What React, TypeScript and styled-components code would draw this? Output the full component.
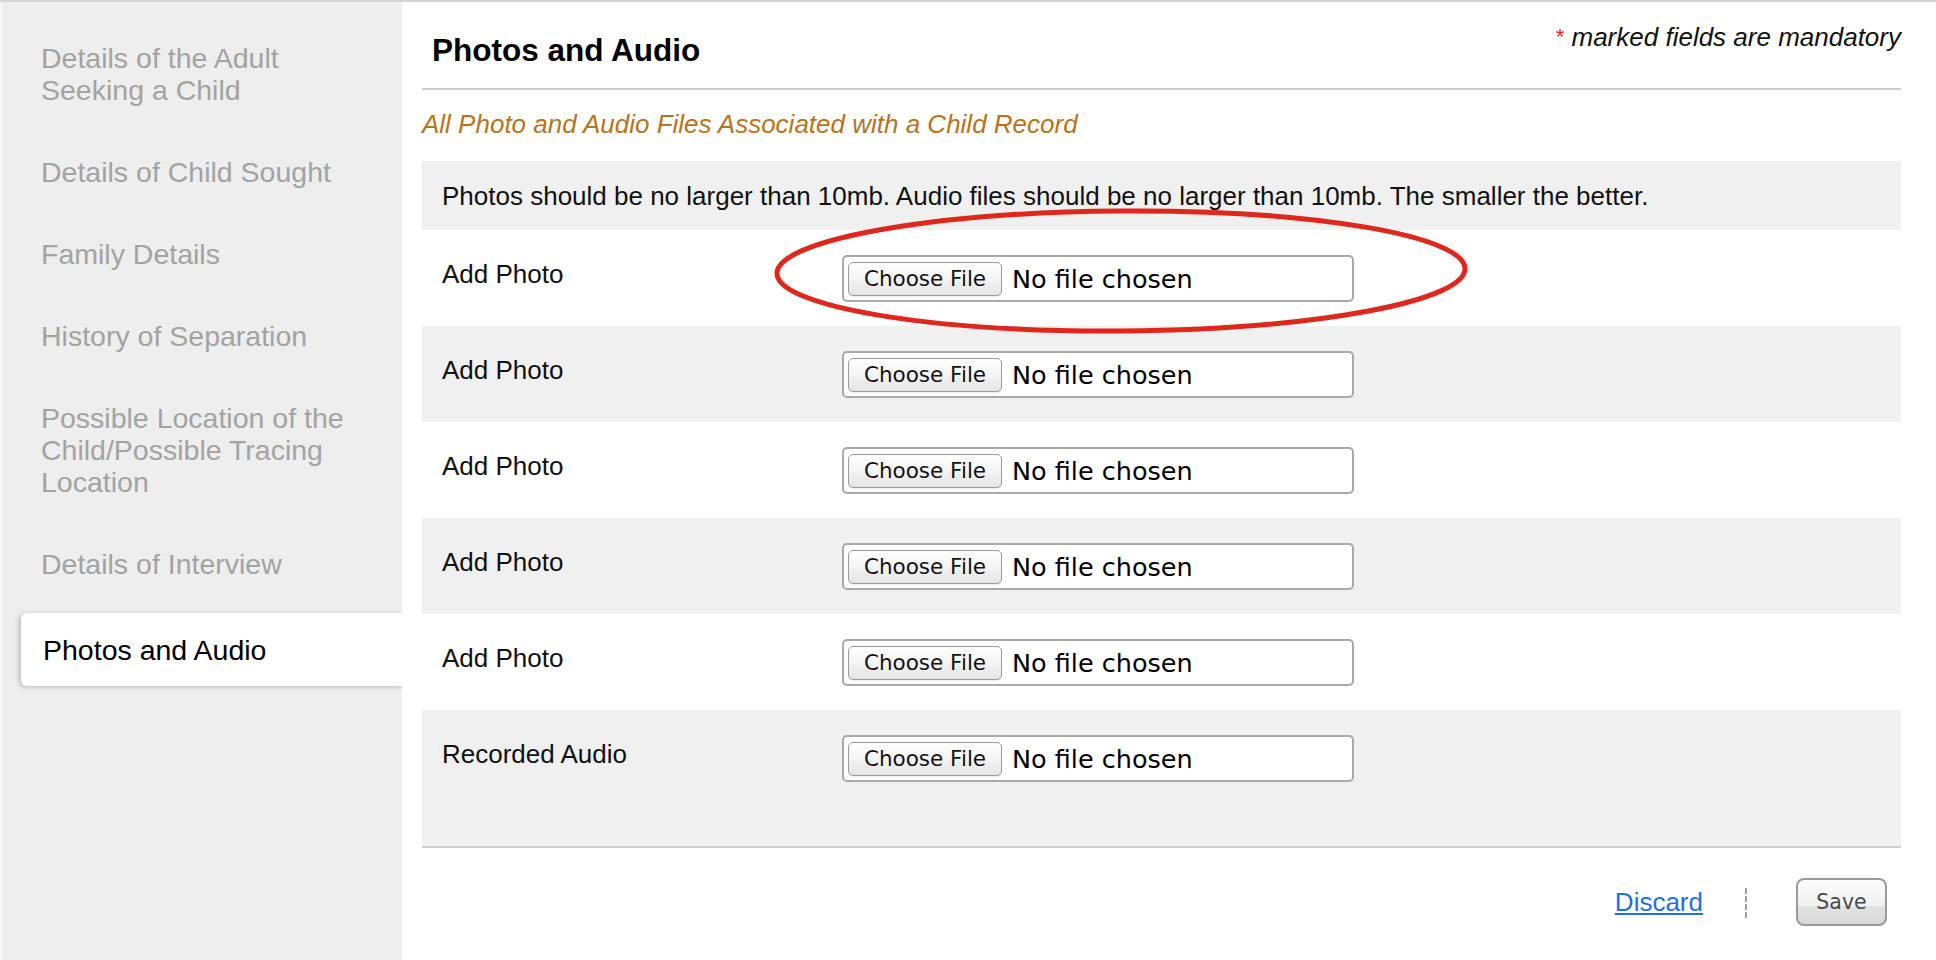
import React from "react";
import styled, { createGlobalStyle } from "styled-components";

const GlobalStyle = createGlobalStyle`
  html, body {
    margin: 0;
    padding: 0;
    background: #ffffff;
  }
  body {
    font-family: "Liberation Sans", Arial, Helvetica, sans-serif;
    color: #111;
  }
  * { box-sizing: border-box; }
`;

const Page = styled.div`
  display: flex;
  min-height: 100vh;
  border-top: 2px solid #d4d4d4;
  background: #fff;
`;

const Sidebar = styled.nav`
  width: 402px;
  flex: 0 0 402px;
  background: #eeeeee;
  border-left: 2px solid #f7f7f7;
  padding: 20px 0 0 19px;
  display: flex;
  flex-direction: column;
  gap: 10px;
`;

const NavItem = styled.div<{ $active?: boolean }>`
  font-size: 28.5px;
  line-height: 32px;
  padding: ${(p) => (p.$active ? "21px 40px 20px 22px" : "20px 40px 20px 20px")};
  margin-top: ${(p) => (p.$active ? "3px" : "0")};
  color: ${(p) => (p.$active ? "#000" : "#a3a3a3")};
  background: ${(p) => (p.$active ? "#fff" : "transparent")};
  border-radius: ${(p) => (p.$active ? "6px 0 0 6px" : "0")};
  box-shadow: ${(p) => (p.$active ? "-2px 1px 5px rgba(0,0,0,0.22)" : "none")};
  margin-right: ${(p) => (p.$active ? "-2px" : "0")};
`;

const Main = styled.main`
  flex: 1;
  position: relative;
  padding: 0 35px 0 20px;
  background: #fff;
`;

const Header = styled.header`
  display: flex;
  justify-content: space-between;
  align-items: flex-start;
  height: 88px;
  border-bottom: 2px solid #cccccc;
`;

const Title = styled.h1`
  margin: 0;
  padding: 30px 0 0 10px;
  font-size: 31.5px;
  line-height: 36px;
  font-weight: 700;
  color: #000;
`;

const Note = styled.div`
  padding-top: 20px;
  font-size: 26px;
  line-height: 30px;
  font-style: italic;
  color: #111;
`;

const Star = styled.span`
  color: #e8231a;
  font-style: normal;
  font-size: 22px;
  vertical-align: 2px;
`;

const Subtitle = styled.p`
  margin: 19px 0 22px 0;
  font-size: 26px;
  line-height: 30px;
  font-style: italic;
  color: #b8731c;
`;

const InfoBox = styled.div`
  background: #f0f0f0;
  padding: 20px 20px 19px 20px;
  font-size: 26px;
  line-height: 30px;
  color: #111;
`;

const Rows = styled.div`
  display: flex;
  flex-direction: column;
  border-bottom: 2px solid #cccccc;
`;

const Row = styled.div<{ $shaded?: boolean; $tall?: boolean }>`
  display: grid;
  grid-template-columns: 400px 512px;
  align-items: start;
  height: ${(p) => (p.$tall ? "136px" : "96px")};
  padding: 0 20px;
  background: ${(p) => (p.$shaded ? "#f0f0f0" : "#ffffff")};
`;

const Label = styled.div`
  padding-top: 29px;
  font-size: 26px;
  line-height: 30px;
  color: #111;
`;

const FileBox = styled.div`
  margin-top: 25px;
  height: 47px;
  display: flex;
  align-items: center;
  padding: 0 4px;
  border: 2px solid #a9a9a9;
  border-radius: 5px;
  background: #fff;
`;

const ChooseButton = styled.button`
  height: 34px;
  width: 154px;
  padding: 0;
  border: 1px solid #9c9c9c;
  border-radius: 5px;
  background: linear-gradient(#fefefe 0%, #f4f4f4 50%, #e4e4e4 100%);
  font-family: "DejaVu Sans", "Liberation Sans", sans-serif;
  font-size: 21.5px;
  line-height: 32px;
  color: #111;
  box-shadow: 0 1px 1px rgba(0,0,0,0.08);
`;

const FileStatus = styled.span`
  margin-left: 10px;
  font-family: "DejaVu Sans", "Liberation Sans", sans-serif;
  font-size: 25.5px;
  line-height: 30px;
  color: #000;
`;

const Footer = styled.footer`
  display: flex;
  justify-content: flex-end;
  align-items: center;
  padding: 30px 14px 0 0;
`;

const DiscardLink = styled.a`
  font-size: 26px;
  line-height: 30px;
  color: #1f6fe8;
  text-decoration: underline;
  cursor: pointer;
`;

const Divider = styled.span`
  display: block;
  height: 30px;
  margin: 2px 49px 0 42px;
  border-left: 2px dashed #a0a0a0;
`;

const SaveButton = styled.button`
  width: 91px;
  height: 48px;
  padding: 0;
  border: 2px solid #9a9a9a;
  border-radius: 8px;
  background: linear-gradient(#fbfbfb 0%, #f1f1f1 58%, #e2e2e2 60%, #d9d9d9 100%);
  font-family: "DejaVu Sans", "Liberation Sans", sans-serif;
  font-size: 20.5px;
  color: #4a4a4a;
`;

const Annotation = styled.svg`
  position: absolute;
  left: 369px;
  top: 200px;
  width: 700px;
  height: 136px;
  overflow: visible;
  pointer-events: none;
`;

const navItems = [
  "Details of the Adult Seeking a Child",
  "Details of Child Sought",
  "Family Details",
  "History of Separation",
  "Possible Location of the Child/Possible Tracing Location",
  "Details of Interview",
  "Photos and Audio",
];

const uploads = [
  "Add Photo",
  "Add Photo",
  "Add Photo",
  "Add Photo",
  "Add Photo",
  "Recorded Audio",
];

export default function App() {
  return (
    <>
      <GlobalStyle />
      <Page>
        <Sidebar>
          {navItems.map((item) => (
            <NavItem key={item} $active={item === "Photos and Audio"}>
              {item}
            </NavItem>
          ))}
        </Sidebar>
        <Main>
          <Header>
            <Title>Photos and Audio</Title>
            <Note>
              <Star>*</Star> marked fields are mandatory
            </Note>
          </Header>
          <Subtitle>All Photo and Audio Files Associated with a Child Record</Subtitle>
          <InfoBox>
            Photos should be no larger than 10mb. Audio files should be no larger than 10mb. The smaller the better.
          </InfoBox>
          <Rows>
            {uploads.map((label, i) => (
              <Row key={i} $shaded={i % 2 === 1} $tall={i === uploads.length - 1}>
                <Label>{label}</Label>
                <FileBox>
                  <ChooseButton type="button">Choose File</ChooseButton>
                  <FileStatus>No file chosen</FileStatus>
                </FileBox>
              </Row>
            ))}
          </Rows>
          <Footer>
            <DiscardLink>Discard</DiscardLink>
            <Divider />
            <SaveButton type="button">Save</SaveButton>
          </Footer>
          <Annotation viewBox="0 0 700 136">
            <ellipse
              cx="350"
              cy="69"
              rx="344"
              ry="60"
              fill="none"
              stroke="#e0271c"
              strokeWidth="5"
              transform="rotate(-0.4 350 69)"
            />
          </Annotation>
        </Main>
      </Page>
    </>
  );
}
